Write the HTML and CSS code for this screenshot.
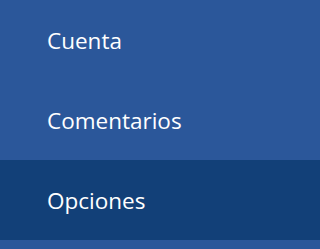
FILE: index.html
```html
<!DOCTYPE html>
<html lang="es">
<head>
<meta charset="utf-8">
<link rel="stylesheet" href="styles.css">
</head>
<body>
<nav class="menu">
  <div class="item">Cuenta</div>
  <div class="item">Comentarios</div>
  <div class="item selected">Opciones</div>
</nav>
</body>
</html>
```
FILE: styles.css
```css
html, body {
  margin: 0;
  padding: 0;
  background: #2b579a;
  height: 100%;
}
.menu {
  display: flex;
  flex-direction: column;
}
.item {
  height: 80px;
  display: flex;
  align-items: center;
  padding-left: 47px;
  color: #ffffff;
  font-family: "Open Sans", "Noto Sans", sans-serif;
  font-size: 22.5px;
}
.selected {
  background: #124078;
}
```
